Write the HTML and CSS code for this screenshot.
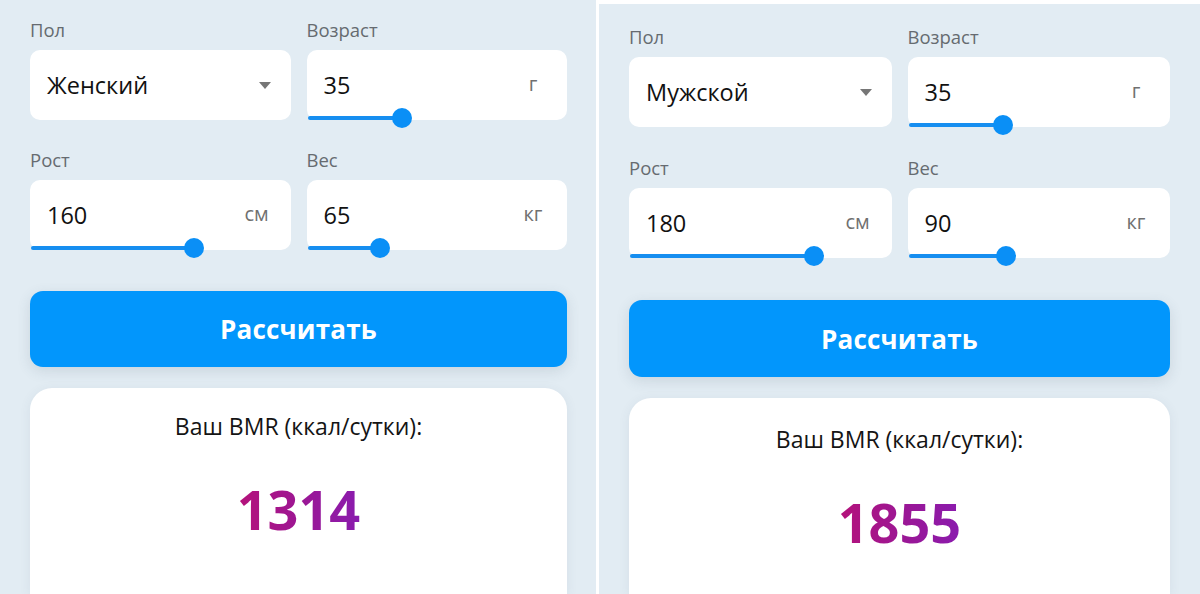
FILE: index.html
```html
<!DOCTYPE html>
<html lang="ru">
<head>
<meta charset="utf-8">
<title>BMR</title>
<link rel="stylesheet" href="styles.css">
</head>
<body>
<div class="page">
  <section class="panel panel-left">
    <div class="grid">
      <div class="field">
        <div class="label">Пол</div>
        <div class="box">
          <span class="value">Женский</span>
          <span class="caret"></span>
        </div>
      </div>
      <div class="field">
        <div class="label">Возраст</div>
        <div class="box">
          <span class="value">35</span>
          <span class="unit">г</span>
          <div class="slider"><div class="fill" style="width:94px"></div><div class="thumb"></div></div>
        </div>
      </div>
      <div class="field">
        <div class="label">Рост</div>
        <div class="box">
          <span class="value">160</span>
          <span class="unit">см</span>
          <div class="slider"><div class="fill" style="width:163px"></div><div class="thumb"></div></div>
        </div>
      </div>
      <div class="field">
        <div class="label">Вес</div>
        <div class="box">
          <span class="value">65</span>
          <span class="unit">кг</span>
          <div class="slider"><div class="fill" style="width:72px"></div><div class="thumb"></div></div>
        </div>
      </div>
    </div>
    <button class="calc">Рассчитать</button>
    <div class="result">
      <div class="result-title">Ваш BMR (ккал/сутки):</div>
      <div class="result-value"><span>1314</span></div>
    </div>
  </section>
  <div class="divider"></div>
  <section class="panel panel-right">
    <div class="grid">
      <div class="field">
        <div class="label">Пол</div>
        <div class="box">
          <span class="value">Мужской</span>
          <span class="caret"></span>
        </div>
      </div>
      <div class="field">
        <div class="label">Возраст</div>
        <div class="box">
          <span class="value">35</span>
          <span class="unit">г</span>
          <div class="slider"><div class="fill" style="width:94px"></div><div class="thumb"></div></div>
        </div>
      </div>
      <div class="field">
        <div class="label">Рост</div>
        <div class="box">
          <span class="value">180</span>
          <span class="unit">см</span>
          <div class="slider"><div class="fill" style="width:184px"></div><div class="thumb"></div></div>
        </div>
      </div>
      <div class="field">
        <div class="label">Вес</div>
        <div class="box">
          <span class="value">90</span>
          <span class="unit">кг</span>
          <div class="slider"><div class="fill" style="width:97px"></div><div class="thumb"></div></div>
        </div>
      </div>
    </div>
    <button class="calc">Рассчитать</button>
    <div class="result">
      <div class="result-title">Ваш BMR (ккал/сутки):</div>
      <div class="result-value"><span>1855</span></div>
    </div>
  </section>
</div>
</body>
</html>
```
FILE: styles.css
```css
* { box-sizing: border-box; }
html, body {
  margin: 0;
  padding: 0;
  width: 1200px;
  height: 594px;
  overflow: hidden;
  background: #ffffff;
  font-family: "Open Sans", "Noto Sans", sans-serif;
}
.page {
  display: flex;
  width: 1200px;
  height: 594px;
}
.panel {
  background: #e2ecf3;
  display: flex;
  flex-direction: column;
  height: 594px;
  overflow: hidden;
}
.panel-left {
  width: 596px;
  padding: 18px 29px 0 30px;
}
.divider {
  width: 3px;
  background: #ffffff;
  flex: none;
}
.panel-right {
  width: 601px;
  margin-top: 4px;
  padding: 21px 30px 0 30px;
  height: 590px;
}
.grid {
  display: grid;
  grid-template-columns: 1fr 1fr;
  column-gap: 16px;
  row-gap: 28px;
}
.panel-right .grid { row-gap: 29px; }
.field {
  display: flex;
  flex-direction: column;
}
.label {
  font-size: 18.5px;
  line-height: 24px;
  color: #666b70;
  margin-bottom: 8px;
}
.box {
  position: relative;
  height: 70px;
  background: #ffffff;
  border-radius: 10px;
  display: flex;
  align-items: center;
  padding: 0 0 0 17px;
}
.value {
  font-size: 23.5px;
  color: #111111;
  flex: 1;
  margin-top: -1px;
}
.unit {
  width: 44px;
  margin-right: 12px;
  text-align: center;
  font-size: 20px;
  color: #707070;
  margin-top: -3px;
}
.caret {
  width: 0;
  height: 0;
  border-left: 6px solid transparent;
  border-right: 6px solid transparent;
  border-top: 7px solid #767676;
  margin-right: 20px;
}
.slider {
  position: absolute;
  left: 1px;
  bottom: 0;
  height: 4px;
  display: flex;
  align-items: center;
}
.fill {
  height: 4px;
  background: #168ef0;
  border-radius: 2px;
}
.thumb {
  width: 20px;
  height: 20px;
  border-radius: 50%;
  background: #0a8ff6;
  margin-left: -10px;
  flex: none;
}
.calc {
  margin-top: 41px;
  height: 76px;
  border: none;
  border-radius: 13px;
  background: #0296fc;
  color: #ffffff;
  font-family: "Open Sans", "Noto Sans", sans-serif;
  font-weight: 700;
  font-size: 26px;
  letter-spacing: 0.2px;
  box-shadow: 0 4px 14px rgba(60, 80, 100, 0.14);
  padding: 0;
  flex: none;
}
.panel-right .calc { margin-top: 42px; height: 77px; }
.result {
  margin-top: 21px;
  background: #ffffff;
  border-radius: 22px 22px 0 0;
  flex: 1;
  display: flex;
  flex-direction: column;
  align-items: center;
  padding-top: 23px;
  box-shadow: 0 2px 12px rgba(60, 80, 100, 0.08);
}
.panel-right .result { padding-top: 26px; }
.result-title {
  font-size: 23px;
  line-height: 30px;
  color: #141414;
}
.result-value {
  margin-top: 36px;
  font-size: 54px;
  line-height: 64px;
  font-weight: 700;
}
.result-value span {
  background: linear-gradient(90deg, #b5127a 0%, #9a1796 55%, #8a1bae 100%);
  -webkit-background-clip: text;
  background-clip: text;
  color: transparent;
}
```
